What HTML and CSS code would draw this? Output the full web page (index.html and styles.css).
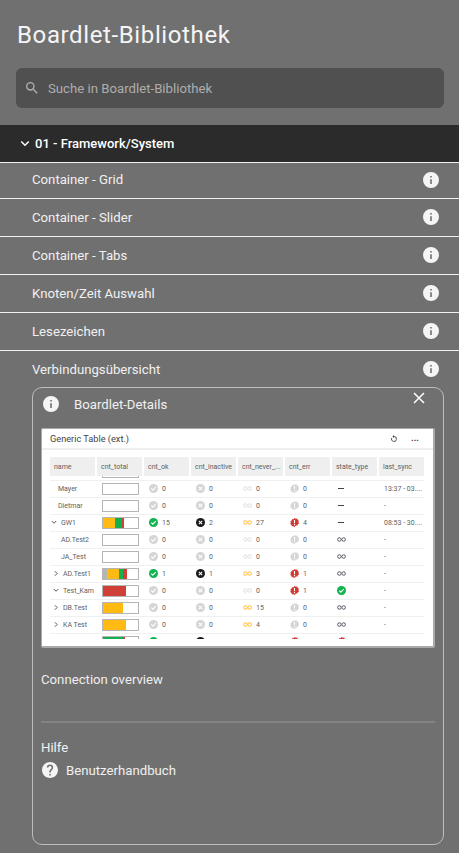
FILE: index.html
```html
<!DOCTYPE html>
<html lang="de">
<head>
  <meta charset="UTF-8">
  <meta name="viewport" content="width=device-width, initial-scale=1.0">
  <title>Boardlet-Bibliothek</title>
  <link rel="stylesheet" href="styles.css">
</head>
<body>
  <svg class="sprites" aria-hidden="true">
    <symbol id="i-info" viewBox="2 2 20 20"><path d="M13,9H11V7H13M13,17H11V11H13M12,2A10,10 0 0,0 2,12A10,10 0 0,0 12,22A10,10 0 0,0 22,12A10,10 0 0,0 12,2Z"/></symbol>
    <symbol id="i-help" viewBox="2 2 20 20"><path d="M15.07,11.25L14.17,12.17C13.45,12.89 13,13.5 13,15H11V14.5C11,13.39 11.45,12.39 12.17,11.67L13.41,10.41C13.78,10.05 14,9.55 14,9C14,7.89 13.1,7 12,7A2,2 0 0,0 10,9H8A4,4 0 0,1 12,5A4,4 0 0,1 16,9C16,9.88 15.64,10.67 15.07,11.25M13,19H11V17H13M12,2A10,10 0 0,0 2,12C2,17.53 6.47,22 12,22C17.53,22 22,17.53 22,12C22,6.47 17.5,2 12,2Z"/></symbol>
    <symbol id="i-ok" viewBox="0 0 16 16"><circle cx="8" cy="8" r="8" fill="currentColor"/><path d="M4 8.2l2.8 2.8L12 5.6" fill="none" stroke="#fff" stroke-width="2"/></symbol>
    <symbol id="i-off" viewBox="0 0 16 16"><circle cx="8" cy="8" r="8" fill="currentColor"/><path d="M5 5l6 6M11 5l-6 6" fill="none" stroke="#fff" stroke-width="2"/></symbol>
    <symbol id="i-never" viewBox="0 0 18 10"><circle cx="4.7" cy="5" r="3.5" fill="none" stroke="currentColor" stroke-width="2"/><circle cx="13.3" cy="5" r="3.5" fill="none" stroke="currentColor" stroke-width="2"/></symbol>
    <symbol id="i-err" viewBox="0 0 16 16"><path fill="currentColor" d="M8 0l2.2 1.2 2.5-.1 1 2.2 2 1.5-.6 2.4.9 2.4-1.9 1.6-.9 2.3-2.5 0L8 16l-2.2-1.5-2.5 0-.9-2.3L.5 10.6l.9-2.4-.6-2.4 2-1.5 1-2.2 2.5.1z"/><path d="M7 3.5h2v6H7zM7 10.8h2v2H7z" fill="#fff"/></symbol>
    <symbol id="i-refresh" viewBox="0 0 16 16"><path d="M8 3a5 5 0 1 1-4.6 3" fill="none" stroke="currentColor" stroke-width="1.8"/><path d="M8 0v6L5 3z" fill="currentColor"/></symbol>
  </svg>

  <h1 class="title">Boardlet-Bibliothek</h1>

  <div class="search">
    <svg class="search-icon" viewBox="0 0 24 24"><path d="M9.5,3A6.5,6.5 0 0,1 16,9.5C16,11.11 15.41,12.59 14.44,13.73L14.71,14H15.5L20.5,19L19,20.5L14,15.5V14.71L13.73,14.44C12.59,15.41 11.11,16 9.5,16A6.5,6.5 0 0,1 3,9.5A6.5,6.5 0 0,1 9.5,3M9.5,5C7,5 5,7 5,9.5C5,12 7,14 9.5,14C12,14 14,12 14,9.5C14,7 12,5 9.5,5Z"/></svg>
    <span>Suche in Boardlet-Bibliothek</span>
  </div>

  <div class="section-head">
    <svg class="section-chevron" viewBox="0 0 12 8"><path d="M1.5 1.5L6 6l4.5-4.5" fill="none" stroke="currentColor" stroke-width="1.8"/></svg>
    <span>01 - Framework/System</span>
  </div>

  <div class="lib-row lib-row-first"><span>Container - Grid</span><svg class="info"><use href="#i-info"/></svg></div>
  <div class="lib-row"><span>Container - Slider</span><svg class="info"><use href="#i-info"/></svg></div>
  <div class="lib-row"><span>Container - Tabs</span><svg class="info"><use href="#i-info"/></svg></div>
  <div class="lib-row"><span>Knoten/Zeit Auswahl</span><svg class="info"><use href="#i-info"/></svg></div>
  <div class="lib-row"><span>Lesezeichen</span><svg class="info"><use href="#i-info"/></svg></div>
  <div class="lib-row lib-row-open"><span>Verbindungsübersicht</span><svg class="info"><use href="#i-info"/></svg></div>

  <div class="details">
    <svg class="details-close" viewBox="0 0 12 12"><path d="M1 1l10 10M11 1L1 11" fill="none" stroke="currentColor" stroke-width="1.5"/></svg>
    <div class="details-head">
      <svg class="info"><use href="#i-info"/></svg>
      <span>Boardlet-Details</span>
    </div>

    <div class="preview">
      <div class="preview-bar">
        <span>Generic Table (ext.)</span>
        <svg class="tool"><use href="#i-refresh"/></svg>
        <span class="tool-dots">...</span>
      </div>
      <div class="gt-head">
        <div>name</div><div>cnt_total</div><div>cnt_ok</div><div>cnt_inactive</div><div>cnt_never_...</div><div>cnt_err</div><div>state_type</div><div>last_sync</div>
      </div>
      <div class="gt-body">
        <div class="gt-row gt-row-cut">
          <div></div><div><div class="bar"></div></div>
        </div>

        <div class="gt-row">
          <div class="nm nm-1">Mayer</div>
          <div><div class="bar"></div></div>
          <div class="num"><svg class="ic dim"><use href="#i-ok"/></svg>0</div>
          <div class="num"><svg class="ic dim"><use href="#i-off"/></svg>0</div>
          <div class="num"><svg class="ic dimmer"><use href="#i-never"/></svg>0</div>
          <div class="num"><svg class="ic dim"><use href="#i-err"/></svg>0</div>
          <div class="num"><span class="dash"></span></div>
          <div>13:37 - 03....</div>
        </div>
        <div class="gt-row">
          <div class="nm nm-1">Dietmar</div>
          <div><div class="bar"></div></div>
          <div class="num"><svg class="ic dim"><use href="#i-ok"/></svg>0</div>
          <div class="num"><svg class="ic dim"><use href="#i-off"/></svg>0</div>
          <div class="num"><svg class="ic dimmer"><use href="#i-never"/></svg>0</div>
          <div class="num"><svg class="ic dim"><use href="#i-err"/></svg>0</div>
          <div class="num"><span class="dash"></span></div>
          <div>-</div>
        </div>
        <div class="gt-row">
          <div class="nm nm-0"><svg class="chev" viewBox="0 0 8 6"><path d="M1 1l3 3 3-3"/></svg>GW1</div>
          <div><div class="bar"><i class="s-y w12"></i><i class="s-g w7"></i><i class="s-r w1"></i></div></div>
          <div class="num"><svg class="ic green"><use href="#i-ok"/></svg>15</div>
          <div class="num"><svg class="ic black"><use href="#i-off"/></svg>2</div>
          <div class="num"><svg class="ic orange"><use href="#i-never"/></svg>27</div>
          <div class="num"><svg class="ic red"><use href="#i-err"/></svg>4</div>
          <div class="num"><span class="dash"></span></div>
          <div>08:53 - 30....</div>
        </div>
        <div class="gt-row">
          <div class="nm nm-2">AD.Test2</div>
          <div><div class="bar"></div></div>
          <div class="num"><svg class="ic dim"><use href="#i-ok"/></svg>0</div>
          <div class="num"><svg class="ic dim"><use href="#i-off"/></svg>0</div>
          <div class="num"><svg class="ic dimmer"><use href="#i-never"/></svg>0</div>
          <div class="num"><svg class="ic dim"><use href="#i-err"/></svg>0</div>
          <div class="num"><svg class="ic slate"><use href="#i-never"/></svg></div>
          <div>-</div>
        </div>
        <div class="gt-row">
          <div class="nm nm-2">JA_Test</div>
          <div><div class="bar"></div></div>
          <div class="num"><svg class="ic dim"><use href="#i-ok"/></svg>0</div>
          <div class="num"><svg class="ic dim"><use href="#i-off"/></svg>0</div>
          <div class="num"><svg class="ic dimmer"><use href="#i-never"/></svg>0</div>
          <div class="num"><svg class="ic dim"><use href="#i-err"/></svg>0</div>
          <div class="num"><svg class="ic slate"><use href="#i-never"/></svg></div>
          <div>-</div>
        </div>
        <div class="gt-row">
          <div class="nm nm-3"><svg class="chev" viewBox="0 0 8 6"><path d="M2.5 0l3 3-3 3"/></svg>AD.Test1</div>
          <div><div class="bar"><i class="s-n w4"></i><i class="s-y w12"></i><i class="s-g w4"></i><i class="s-r w4"></i></div></div>
          <div class="num"><svg class="ic green"><use href="#i-ok"/></svg>1</div>
          <div class="num"><svg class="ic black"><use href="#i-off"/></svg>1</div>
          <div class="num"><svg class="ic orange"><use href="#i-never"/></svg>3</div>
          <div class="num"><svg class="ic red"><use href="#i-err"/></svg>1</div>
          <div class="num"><svg class="ic slate"><use href="#i-never"/></svg></div>
          <div>-</div>
        </div>
        <div class="gt-row">
          <div class="nm nm-3"><svg class="chev" viewBox="0 0 8 6"><path d="M1 1l3 3 3-3"/></svg>Test_Kam</div>
          <div><div class="bar"><i class="s-r w23"></i></div></div>
          <div class="num"><svg class="ic dim"><use href="#i-ok"/></svg>0</div>
          <div class="num"><svg class="ic dim"><use href="#i-off"/></svg>0</div>
          <div class="num"><svg class="ic dimmer"><use href="#i-never"/></svg>0</div>
          <div class="num"><svg class="ic red"><use href="#i-err"/></svg>1</div>
          <div class="num"><svg class="ic green"><use href="#i-ok"/></svg></div>
          <div>-</div>
        </div>
        <div class="gt-row">
          <div class="nm nm-3"><svg class="chev" viewBox="0 0 8 6"><path d="M2.5 0l3 3-3 3"/></svg>DB.Test</div>
          <div><div class="bar"><i class="s-y w20"></i></div></div>
          <div class="num"><svg class="ic dim"><use href="#i-ok"/></svg>0</div>
          <div class="num"><svg class="ic dim"><use href="#i-off"/></svg>0</div>
          <div class="num"><svg class="ic orange"><use href="#i-never"/></svg>15</div>
          <div class="num"><svg class="ic dim"><use href="#i-err"/></svg>0</div>
          <div class="num"><svg class="ic slate"><use href="#i-never"/></svg></div>
          <div>-</div>
        </div>
        <div class="gt-row">
          <div class="nm nm-3"><svg class="chev" viewBox="0 0 8 6"><path d="M2.5 0l3 3-3 3"/></svg>KA Test</div>
          <div><div class="bar"><i class="s-y w23"></i></div></div>
          <div class="num"><svg class="ic dim"><use href="#i-ok"/></svg>0</div>
          <div class="num"><svg class="ic dim"><use href="#i-off"/></svg>0</div>
          <div class="num"><svg class="ic orange"><use href="#i-never"/></svg>4</div>
          <div class="num"><svg class="ic dim"><use href="#i-err"/></svg>0</div>
          <div class="num"><svg class="ic slate"><use href="#i-never"/></svg></div>
          <div>-</div>
        </div>
        <div class="gt-row">
          <div></div>
          <div><div class="bar"><i class="s-g w20"></i><i class="s-r w1"></i></div></div>
          <div class="num"><svg class="ic green"><use href="#i-ok"/></svg></div>
          <div class="num"><svg class="ic black"><use href="#i-off"/></svg></div>
          <div class="num"></div>
          <div class="num"><svg class="ic red"><use href="#i-err"/></svg></div>
          <div class="num"><svg class="ic red"><use href="#i-err"/></svg></div>
          <div></div>
        </div>
      </div>
    </div>

    <p class="details-desc">Connection overview</p>
    <hr class="details-rule">
    <p class="help-title">Hilfe</p>
    <div class="help-link">
      <svg class="info"><use href="#i-help"/></svg>
      <span>Benutzerhandbuch</span>
    </div>
  </div>
</body>
</html>
```

FILE: styles.css
```css
* {
  box-sizing: border-box;
}
body {
  margin: 0;
  height: 853px;
  overflow: hidden;
  background-color: #707070;
  color: #f0f0f0;
  font-family: Roboto, sans-serif;
  font-size: 13.2px;
}
.sprites {
  display: none;
}
.title {
  margin: 0;
  padding: 20px 17px 17px;
  font-size: 24px;
  line-height: 31px;
  font-weight: 400;
  letter-spacing: 0.62px;
  color: #f5f5f5;
}
.search {
  display: flex;
  align-items: center;
  gap: 8px;
  height: 40px;
  margin: 0 15px 17px 16px;
  padding-left: 8px;
  background: #505050;
  border-radius: 6px;
  color: #adadad;
}
.search-icon {
  width: 16px;
  height: 16px;
  fill: #b0b0b0;
}
.section-head {
  display: flex;
  align-items: center;
  gap: 5px;
  height: 37px;
  padding-left: 20px;
  background: #2b2b2b;
  color: #fff;
  font-size: 13px;
  font-weight: 500;
}
.section-chevron {
  width: 10px;
  height: 7px;
}
.lib-row {
  display: flex;
  align-items: center;
  justify-content: space-between;
  height: 38px;
  padding: 0 20px 1px 32px;
  border-bottom: 1px solid #f2f2f2;
}
.lib-row-first {
  height: 37px;
  padding-bottom: 2px;
  border-top: 1px solid #f2f2f2;
}
.lib-row-open {
  height: 36px;
  padding-bottom: 0;
  border-bottom: none;
}
.info {
  width: 16px;
  height: 16px;
  fill: #f5f5f5;
}

.details {
  position: relative;
  height: 458px;
  margin: 0 15px 0 32px;
  padding: 0 8px;
  border: 1px solid #bdbdbd;
  border-radius: 10px;
}
.details-close {
  position: absolute;
  top: 4px;
  right: 18px;
  width: 12px;
  height: 12px;
  color: #fff;
}
.details-head {
  display: flex;
  align-items: center;
  gap: 15px;
  height: 32px;
  margin-left: 2px;
}
.preview {
  height: 220px;
  margin-top: 8px;
  background: #fff;
  border: solid #a9a9a9;
  border-width: 1px 2px 2px 1px;
  border-radius: 2px;
  color: #606060;
  font-size: 7px;
}
.preview-bar {
  display: flex;
  align-items: center;
  height: 21px;
  padding: 0 14px 0 8px;
  border-bottom: 2px solid #eeeeee;
  color: #444;
  font-size: 9.2px;
}
.preview-bar span:first-child {
  flex: 1;
}
.tool {
  width: 8px;
  height: 8px;
  margin-right: 13px;
  color: #444;
}
.tool-dots {
  font-weight: 700;
  line-height: 6px;
  height: 8px;
}
.gt-head,
.gt-row {
  display: grid;
  grid-template-columns: repeat(8, 45px);
  gap: 2px;
  margin-left: 8px;
  width: 374px;
}
.gt-head {
  height: 19px;
  margin-top: 7px;
}
.gt-head div {
  display: flex;
  align-items: center;
  padding-left: 4px;
  background: #efefef;
  border-radius: 1px;
  white-space: nowrap;
}
.gt-body {
  height: 162.5px;
  overflow: hidden;
}
.gt-row {
  align-items: center;
  height: 17px;
  border-bottom: 1px solid #f0f0f0;
}
.gt-row > div {
  padding-left: 5px;
  white-space: nowrap;
}
.gt-row-cut {
  margin-top: -12.5px;
}
.nm {
  display: flex;
  align-items: center;
}
.nm-1 {
  padding-left: 8px !important;
}
.nm-0 {
  padding-left: 1px !important;
}
.nm-2 {
  padding-left: 11px !important;
}
.nm-3 {
  padding-left: 3px !important;
}
.chev {
  flex: none;
  width: 6px;
  height: 5px;
  margin-right: 4px;
  fill: none;
  stroke: #444;
  stroke-width: 1.2;
}
.num {
  display: flex;
  align-items: center;
  gap: 4px;
}
.ic {
  flex: none;
  width: 9px;
  height: 9px;
}
.dim {
  color: #d5d5d5;
}
.dimmer {
  color: #dedede;
}
.green {
  color: #11b44f;
}
.black {
  color: #1a1a1a;
}
.orange {
  color: #ffb938;
}
.red {
  color: #d13a32;
}
.slate {
  color: #555a66;
}
.dash {
  width: 6px;
  height: 1px;
  margin-left: 1px;
  background: #444;
}
.bar {
  display: flex;
  width: 37px;
  height: 12px;
  background: #fff;
  border: 1px solid #b5b5b5;
}
.bar i {
  display: block;
  height: 100%;
}
.s-y {
  background: #ffbb13;
}
.s-g {
  background: #12b04e;
}
.s-r {
  background: #cf4037;
}
.s-n {
  background: #b5b5b5;
}
.w1 {
  width: 1.5px;
}
.w4 {
  width: 4px;
}
.w7 {
  width: 7px;
}
.w12 {
  width: 12px;
}
.w20 {
  width: 20px;
}
.w23 {
  width: 23px;
}
.details-desc {
  margin: 24px 0 0;
  line-height: 16px;
  color: #eeeeee;
}
.details-rule {
  margin: 33px 0 0;
  height: 2px;
  border: none;
  background: #838383;
}
.help-title {
  margin: 17px 0 0;
  line-height: 16px;
}
.help-link {
  display: flex;
  align-items: center;
  gap: 8px;
  margin-top: 6px;
  height: 16px;
  padding-left: 1px;
}
```
